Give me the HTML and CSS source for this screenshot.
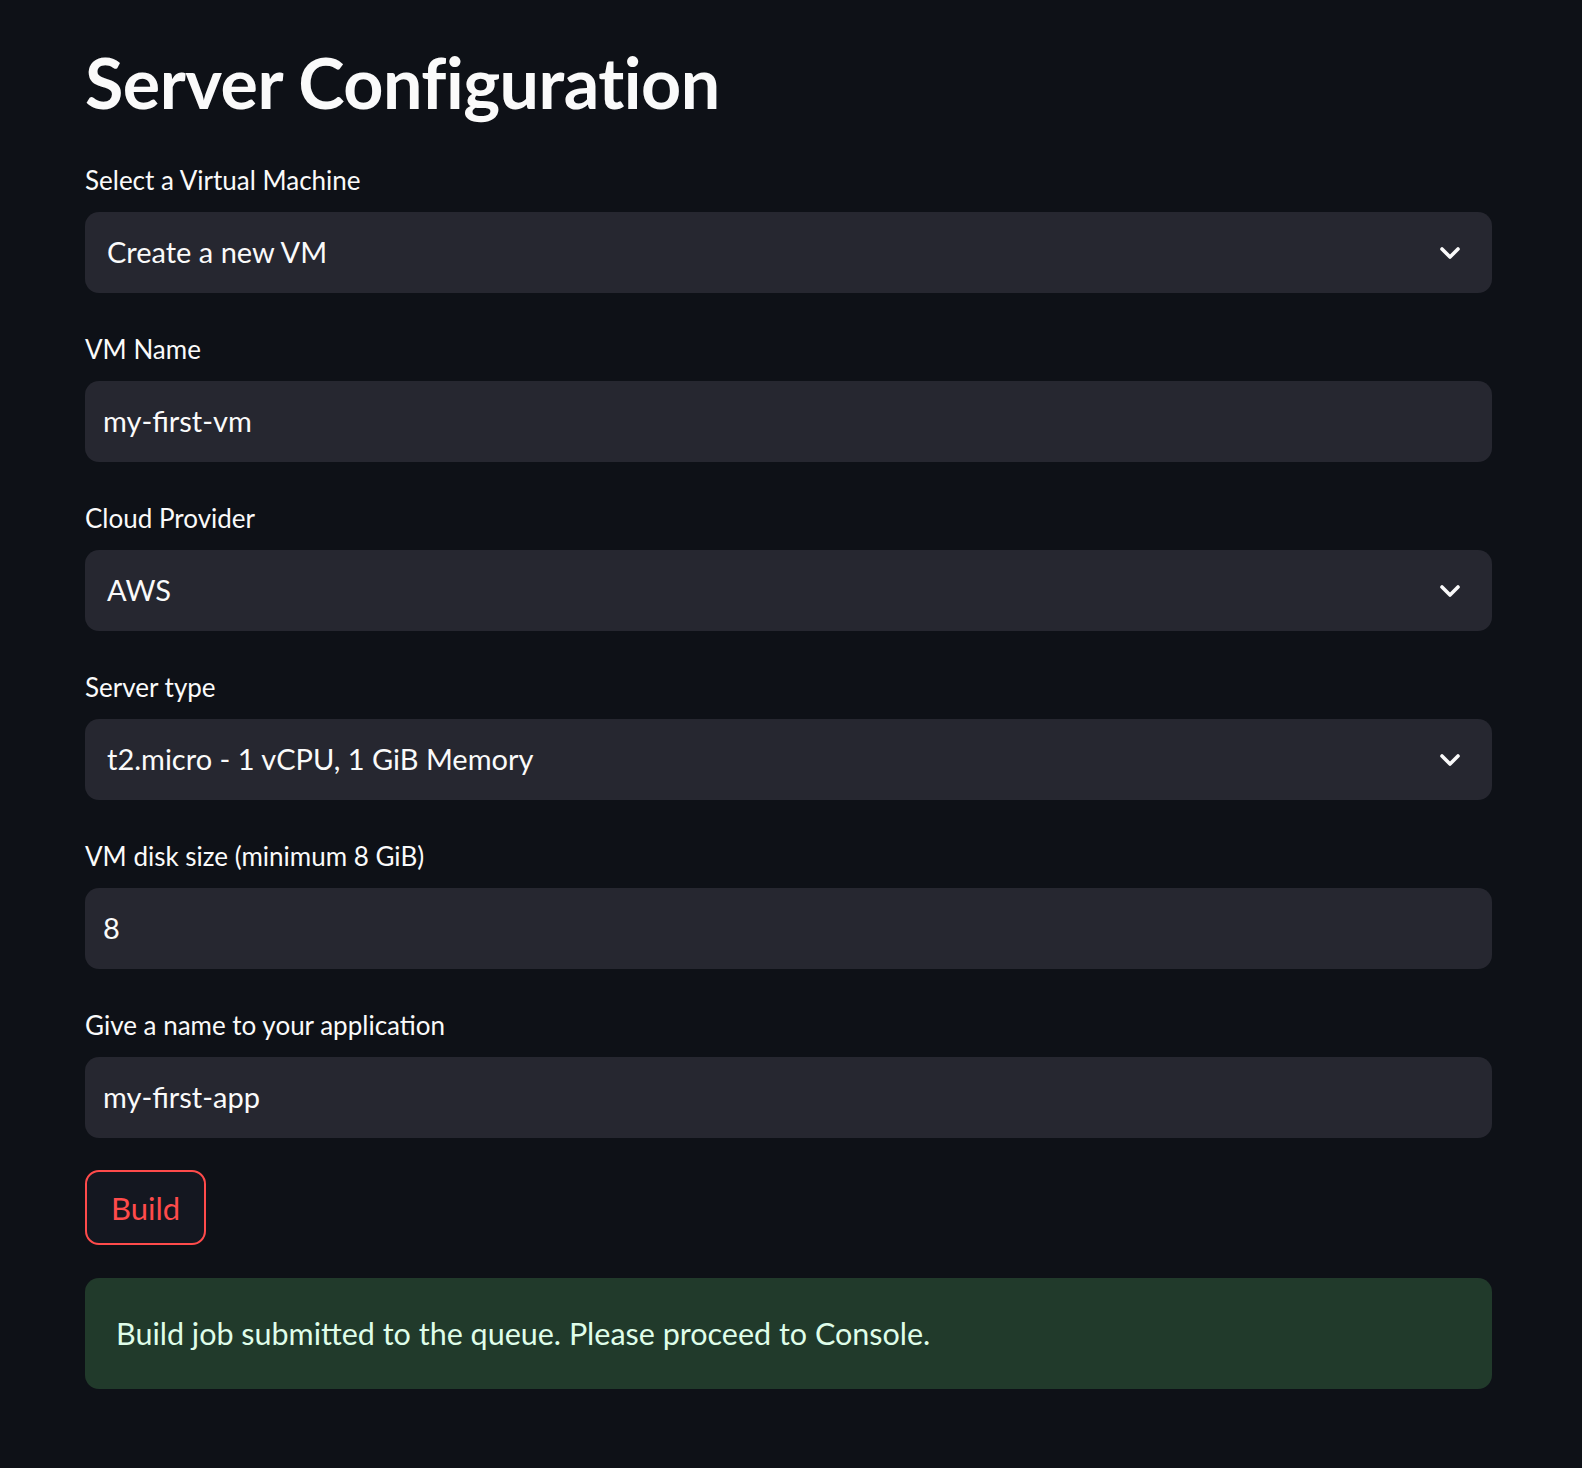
FILE: index.html
```html
<!DOCTYPE html>
<html>
<head>
<meta charset="utf-8">
<link rel="stylesheet" href="styles.css">
</head>
<body>
<main class="main">
  <h1 class="title">Server Configuration</h1>

  <div class="field">
    <div class="label">Select a Virtual Machine</div>
    <div class="box select"><span class="value">Create a new VM</span>
      <svg class="chev" viewBox="0 0 20 12"><path d="M2 2 L10 10 L18 2" fill="none" stroke="#fafafa" stroke-width="3.6" stroke-linecap="round" stroke-linejoin="round"/></svg>
    </div>
  </div>

  <div class="field">
    <div class="label">VM Name</div>
    <div class="box input"><span class="value">my-first-vm</span></div>
  </div>

  <div class="field">
    <div class="label">Cloud Provider</div>
    <div class="box select"><span class="value">AWS</span>
      <svg class="chev" viewBox="0 0 20 12"><path d="M2 2 L10 10 L18 2" fill="none" stroke="#fafafa" stroke-width="3.6" stroke-linecap="round" stroke-linejoin="round"/></svg>
    </div>
  </div>

  <div class="field">
    <div class="label">Server type</div>
    <div class="box select"><span class="value">t2.micro - 1 vCPU, 1 GiB Memory</span>
      <svg class="chev" viewBox="0 0 20 12"><path d="M2 2 L10 10 L18 2" fill="none" stroke="#fafafa" stroke-width="3.6" stroke-linecap="round" stroke-linejoin="round"/></svg>
    </div>
  </div>

  <div class="field">
    <div class="label">VM disk size (minimum 8 GiB)</div>
    <div class="box input"><span class="value">8</span></div>
  </div>

  <div class="field">
    <div class="label">Give a name to your application</div>
    <div class="box input"><span class="value">my-first-app</span></div>
  </div>

  <button class="btn">Build</button>

  <div class="alert">Build job submitted to the queue. Please proceed to Console.</div>
</main>
</body>
</html>
```
FILE: styles.css
```css
html, body {
  margin: 0;
  padding: 0;
  background: #0e1117;
}
body {
  font-family: Lato, "Noto Sans", sans-serif;
  color: #fafafa;
  height: 1468px;
}
.main {
  width: 1407px;
  padding: 40px 0 0 85px;
}
.title {
  margin: 0;
  font-size: 70px;
  font-weight: 700;
  line-height: 84px;
  height: 125px;
  letter-spacing: -0.5px;
}
.field {
  display: flex;
  flex-direction: column;
}
.field + .field { margin-top: 41px; }
.label {
  font-size: 26px;
  line-height: 30px;
  height: 30px;
  margin-bottom: 17px;
}
.box {
  height: 81px;
  background: #262730;
  border-radius: 14px;
  display: flex;
  align-items: center;
  box-sizing: border-box;
  padding-bottom: 3px;
}
.select { padding-left: 22px; padding-right: 32px; justify-content: space-between; }
.input { padding-left: 18px; padding-right: 18px; }
.value {
  font-size: 29px;
}
.chev {
  width: 20px;
  height: 12px;
  margin-top: 3px;
}
.btn {
  display: block;
  margin-top: 32px;
  width: 121px;
  height: 75px;
  box-sizing: border-box;
  border: 2px solid #ff4b4b;
  border-radius: 14px;
  background: #141720;
  color: #ff4b4b;
  font-family: Lato, "Noto Sans", sans-serif;
  font-size: 31px;
  padding: 0;
}
.alert {
  margin-top: 33px;
  height: 111px;
  background: #213a2b;
  border-radius: 14px;
  color: #dffde9;
  font-size: 30.5px;
  display: flex;
  align-items: center;
  padding-left: 31px;
  padding-bottom: 2px;
  box-sizing: border-box;
}
```
